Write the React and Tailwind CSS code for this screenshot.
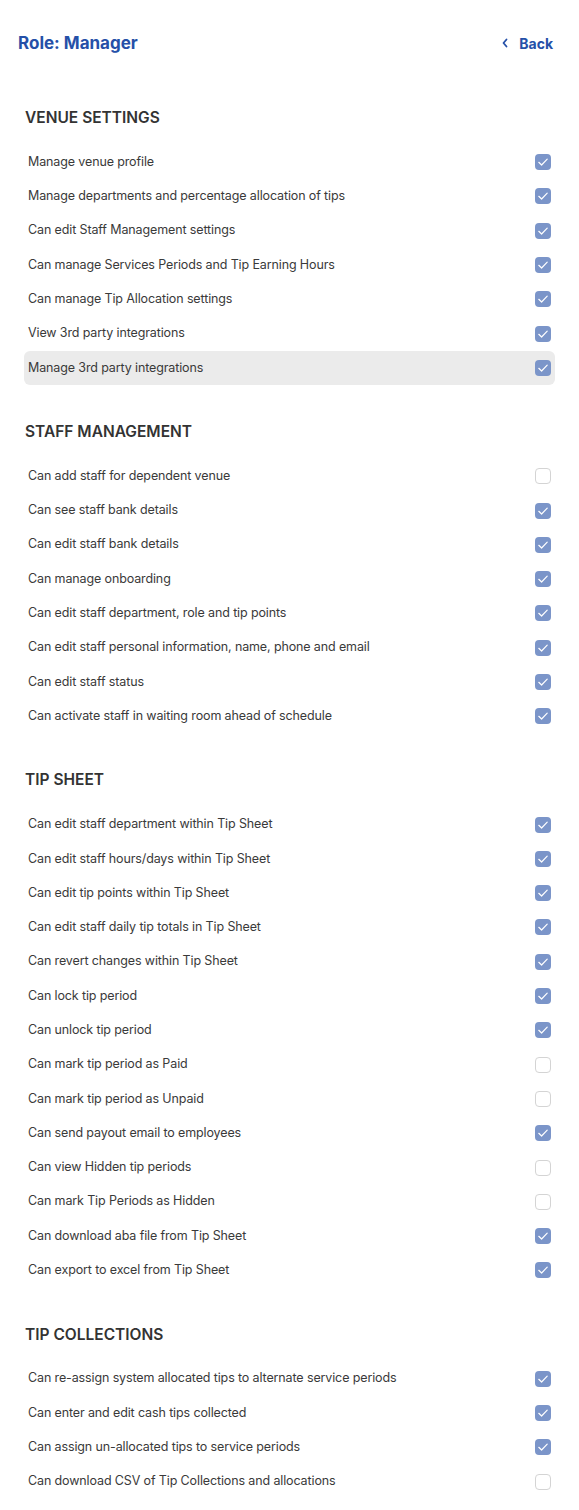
import React from "react";

const sections = [
  {
    title: "VENUE SETTINGS",
    rows: [
      ["Manage venue profile", true],
      ["Manage departments and percentage allocation of tips", true],
      ["Can edit Staff Management settings", true],
      ["Can manage Services Periods and Tip Earning Hours", true],
      ["Can manage Tip Allocation settings", true],
      ["View 3rd party integrations", true],
      ["Manage 3rd party integrations", true, true],
    ],
  },
  {
    title: "STAFF MANAGEMENT",
    rows: [
      ["Can add staff for dependent venue", false],
      ["Can see staff bank details", true],
      ["Can edit staff bank details", true],
      ["Can manage onboarding", true],
      ["Can edit staff department, role and tip points", true],
      ["Can edit staff personal information, name, phone and email", true],
      ["Can edit staff status", true],
      ["Can activate staff in waiting room ahead of schedule", true],
    ],
  },
  {
    title: "TIP SHEET",
    rows: [
      ["Can edit staff department within Tip Sheet", true],
      ["Can edit staff hours/days within Tip Sheet", true],
      ["Can edit tip points within Tip Sheet", true],
      ["Can edit staff daily tip totals in Tip Sheet", true],
      ["Can revert changes within Tip Sheet", true],
      ["Can lock tip period", true],
      ["Can unlock tip period", true],
      ["Can mark tip period as Paid", false],
      ["Can mark tip period as Unpaid", false],
      ["Can send payout email to employees", true],
      ["Can view Hidden tip periods", false],
      ["Can mark Tip Periods as Hidden", false],
      ["Can download aba file from Tip Sheet", true],
      ["Can export to excel from Tip Sheet", true],
    ],
  },
  {
    title: "TIP COLLECTIONS",
    rows: [
      ["Can re-assign system allocated tips to alternate service periods", true],
      ["Can enter and edit cash tips collected", true],
      ["Can assign un-allocated tips to service periods", true],
      ["Can download CSV of Tip Collections and allocations", false],
    ],
  },
];

function Checkbox({ checked }) {
  if (checked) {
    return (
      <svg width="16" height="16" viewBox="0 0 16 16" className="shrink-0">
        <rect x="0" y="0" width="16" height="16" rx="4" fill="#7b95c9" />
        <path d="M3.8 8.3l2.8 2.7L12.2 5.2" fill="none" stroke="#ffffff" strokeWidth="1.2" strokeLinecap="round" strokeLinejoin="round" />
      </svg>
    );
  }
  return <div className="w-4 h-4 shrink-0 rounded-[4px] border border-[#d4d4d4] bg-white" />;
}

export default function App() {
  return (
    <div className="min-h-[1510px] bg-white font-['Inter',sans-serif] text-[#333333] antialiased">
      <div className="flex items-center justify-between pl-[18px] pr-[26px] pt-[29px] h-[57px]">
        <h1 className="text-[17px] leading-[28px] font-bold text-[#2550a8]">Role: Manager</h1>
        <button className="flex items-center gap-[10px] text-[14px] font-bold text-[#2550a8]">
          <svg width="8" height="10" viewBox="0 0 8 10">
            <path d="M5.5 1.5L2.5 5l3 3.5" fill="none" stroke="#2550a8" strokeWidth="1.8" strokeLinecap="round" strokeLinejoin="round" />
          </svg>
          Back
        </button>
      </div>
      <div className="px-[24px] pt-[49px] flex flex-col gap-[35px] pb-[13px]">
        {sections.map((s) => (
          <section key={s.title}>
            <h2 className="pl-px text-[15.5px] leading-[24px] font-semibold text-[#333333]">{s.title}</h2>
            <div className="mt-[15px] flex flex-col">
              {s.rows.map(([label, checked, hl]) => (
                <div
                  key={label}
                  className={`flex items-center justify-between h-[34.3px] pl-[4px] pr-[4px] rounded-[6px] ${hl ? "bg-[#ebebeb]" : ""}`}
                >
                  <span className="text-[12.5px] tracking-[-0.01em] font-normal text-[#3a3a3a]">{label}</span>
                  <Checkbox checked={checked} />
                </div>
              ))}
            </div>
          </section>
        ))}
      </div>
    </div>
  );
}
